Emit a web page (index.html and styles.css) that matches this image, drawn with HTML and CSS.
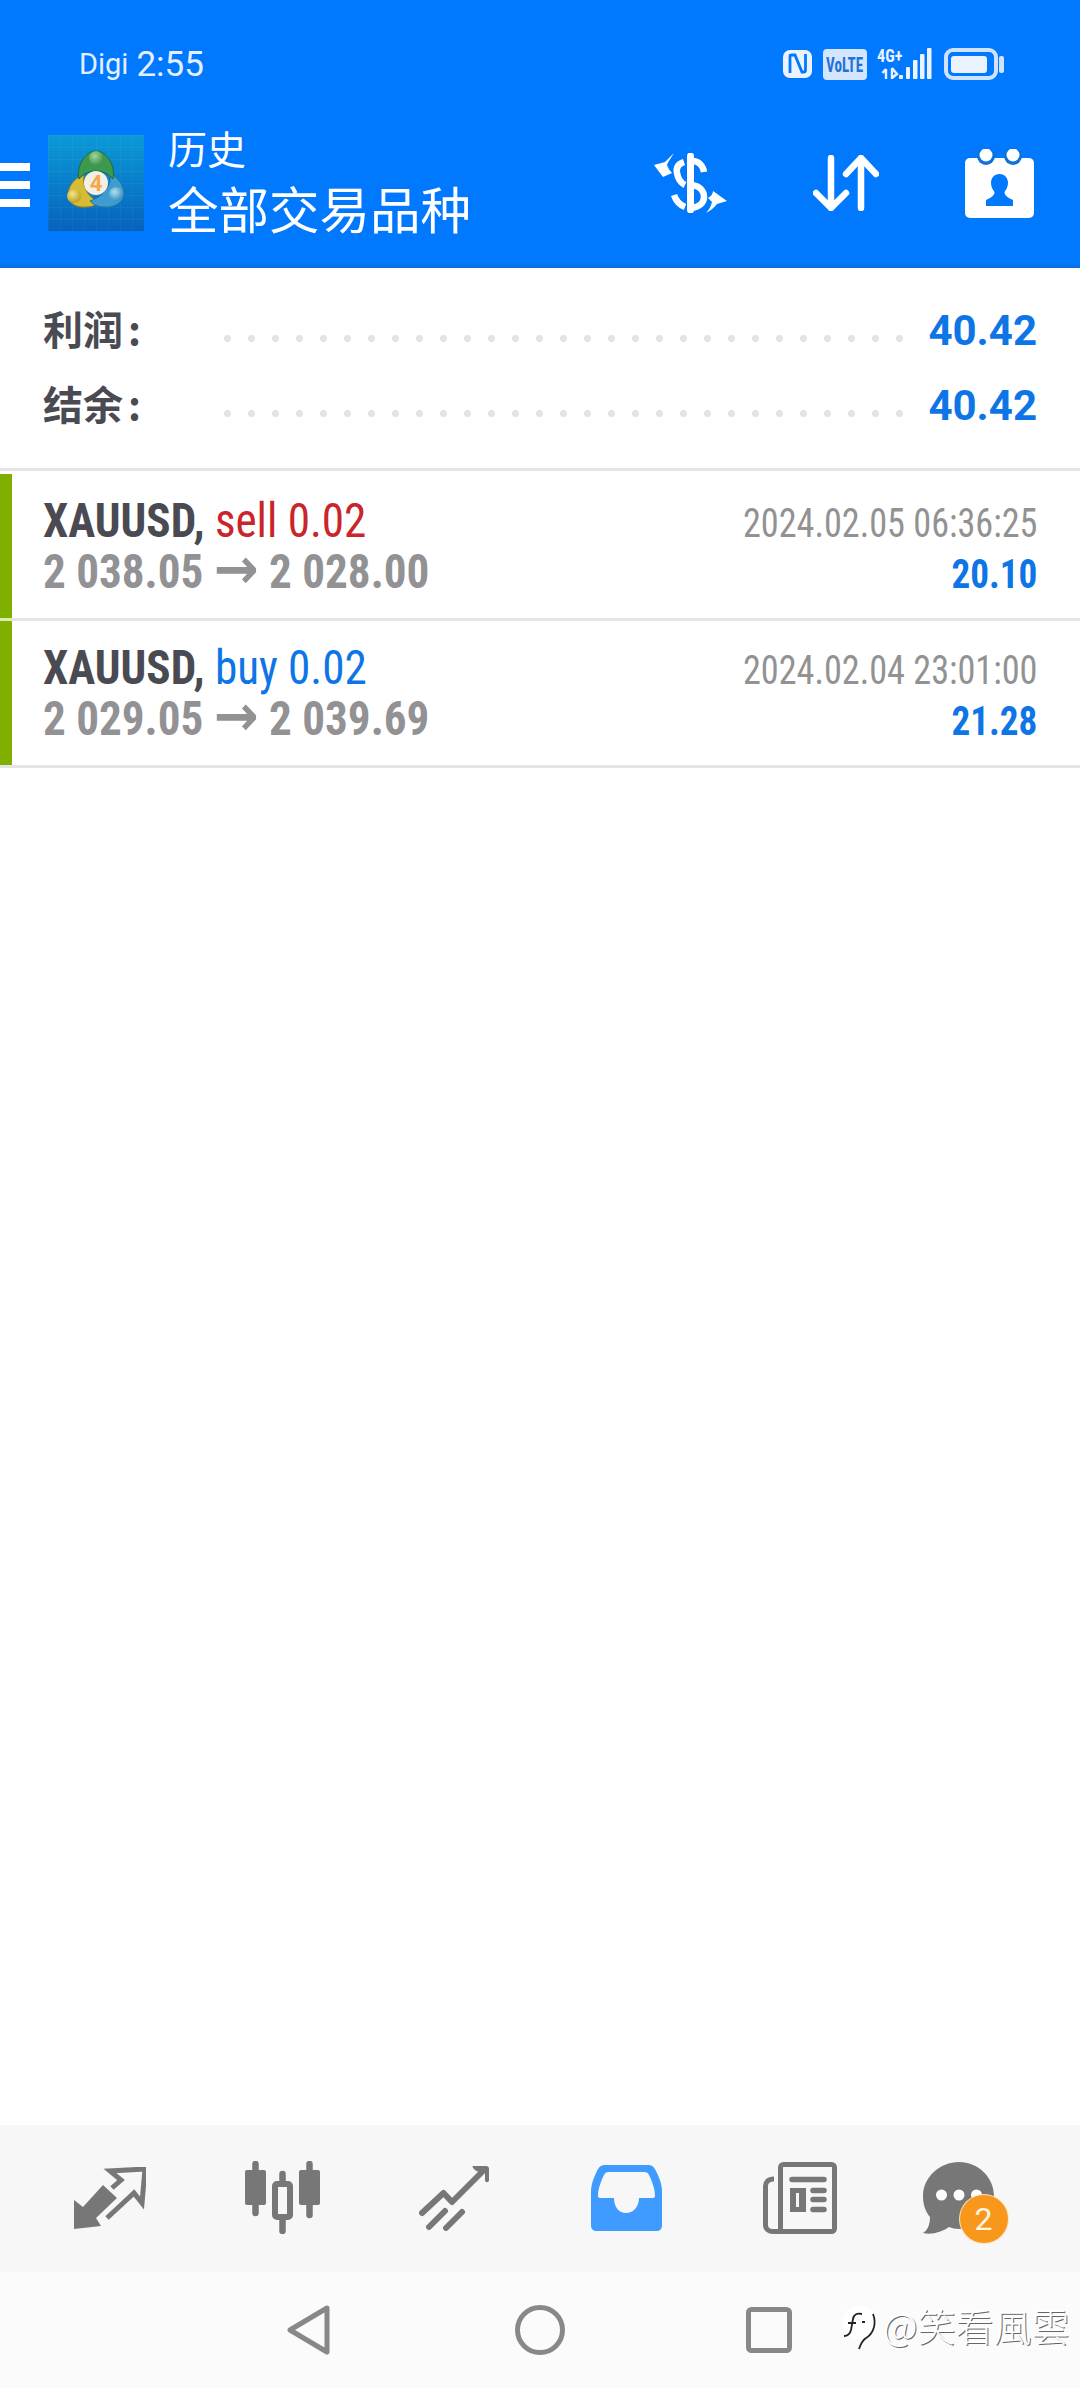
FILE: index.html
```html
<!DOCTYPE html>
<html>
	<head>
		<meta charset='utf8' />
		<title>历史</title>
		<link rel="stylesheet" href="styles.css">
	</head>
	<body>
		<div class="phone">
			<header class="top">
				<div class="status">
					<span class="carrier">Digi</span>
					<span class="clock">2:55</span>
					<div class="status-icons">
						<svg width="29" height="28" viewBox="0 0 29 28">
							<rect width="29" height="28" rx="7" fill="#eaf3ff"/>
							<path d="M7 23V6C7 5 8 5 9 5H12L19 22H21C22 22 22.500 21 22.500 20V4" fill="none" stroke="#0079ff" stroke-width="2.800"/>
						</svg>
						<svg class="volte" width="44" height="31" viewBox="0 0 44 31">
							<rect width="44" height="31" rx="4" fill="#d4e6ff"/>
							<text transform="translate(3 23) scale(.72 1)" class="volte-text">VoLTE</text>
						</svg>
						<svg class="signal" width="55" height="40" viewBox="0 -4 55 40">
							<text transform="translate(0 14) scale(.9 1)" class="net">4G+</text>
							<path d="M9 21V31M5.500 25L9 21M15 20V31M15 20L20 26L15 30" fill="none" stroke="#eaf3ff" stroke-width="2.400"/>
							<rect x="22" y="27" width="4" height="4" rx="1" fill="#eaf3ff"/>
							<rect x="29" y="19" width="4" height="12" rx="1" fill="#eaf3ff"/>
							<rect x="36" y="12" width="4.500" height="19" rx="1" fill="#eaf3ff"/>
							<rect x="43" y="6" width="4.500" height="25" rx="1" fill="#eaf3ff"/>
							<rect x="50" y="0" width="4.500" height="31" rx="1" fill="#eaf3ff"/>
						</svg>
						<svg class="battery" width="60" height="32" viewBox="0 0 60 32">
							<rect x="2" y="2" width="50" height="28" rx="7" fill="none" stroke="#cfe3ff" stroke-width="4"/>
							<rect x="7" y="8" width="36" height="17" rx="3" fill="#eaf3ff"/>
							<rect x="55" y="8" width="5" height="17" rx="2" fill="#cfe3ff"/>
						</svg>
					</div>
				</div>
				<div class="toolbar">
					<div class="burger"><i></i><i></i><i></i></div>
					<svg class="logo" width="96" height="96" viewBox="0 0 96 96">
						<defs>
							<linearGradient id="logobg" x1="0" y1="0" x2="0" y2="1">
								<stop offset="0" stop-color="#0a9ad6"/>
								<stop offset="1" stop-color="#0663bd"/>
							</linearGradient>
							<pattern id="logogrid" width="12" height="12" patternUnits="userSpaceOnUse">
								<path d="M12 0H0V12" fill="none" stroke="#fff" stroke-opacity=".08"/>
							</pattern>
							<radialGradient id="greenball" cx=".4" cy=".35" r=".7">
								<stop offset="0" stop-color="#a6d596"/>
								<stop offset="1" stop-color="#3a9450"/>
							</radialGradient>
							<radialGradient id="yellowball" cx=".4" cy=".35" r=".7">
								<stop offset="0" stop-color="#f4e684"/>
								<stop offset="1" stop-color="#b79c22"/>
							</radialGradient>
							<radialGradient id="blueball" cx=".4" cy=".35" r=".7">
								<stop offset="0" stop-color="#b0e0f0"/>
								<stop offset="1" stop-color="#2f8cbe"/>
							</radialGradient>
						</defs>
						<rect width="96" height="96" fill="url(#logobg)"/>
						<rect width="96" height="96" fill="url(#logogrid)"/>
						<path d="M36 40C28 42 20 50 20 60C20 68 28 73 38 72C44 72 48 70 52 67C42 64 34 54 36 40Z" fill="#d6bc34" stroke="#8f7c1c" stroke-width="1"/>
						<path d="M62 38C70 42 77 52 76 60C75 68 66 73 56 72C50 72 46 70 42 66C54 62 64 52 62 38Z" fill="#3f9ccf" stroke="#1c6f9f" stroke-width="1"/>
						<path d="M31 44C28 30 38 16 48 16C58 16 68 30 65 44C60 38 54 36 48 36C42 36 36 38 31 44Z" fill="#3d9850" stroke="#1f6b3a" stroke-width="1"/>
						<circle cx="48" cy="23" r="7" fill="url(#greenball)"/>
						<circle cx="26" cy="61" r="7" fill="url(#yellowball)"/>
						<circle cx="68" cy="59" r="7" fill="url(#blueball)"/>
						<circle cx="48" cy="48" r="12" fill="#f4efe6"/>
						<text x="48" y="56" class="logo-four">4</text>
					</svg>
					<div class="titles">
						<div class="title-small">历史</div>
						<div class="title-big">全部交易品种</div>
					</div>
					<div class="actions">
						<svg width="73" height="60" viewBox="0 0 73 60">
							<path d="M0 12L11 9C14 6 17 3 20 0C17 5 14 9 13 12C14 15 16 18 18 20L9 24Z" fill="#fff"/>
							<path d="M73 48L59 38C59 41 57 43 54 45L58 49C57 53 55 57 52 60C56 58 60 55 63 51Z" fill="#fff"/>
							<path d="M36.500 3V57" fill="none" stroke="#fff" stroke-width="7" stroke-linecap="round"/>
							<path d="M38 8C45 8 49 13 50 19M30 9C24 11 22 15 23 20C24 26 27 30 31 32M38 32C46 33 50 38 50 44C50 50 45 54 38 55M31 54C26 52 22 48 20 42" fill="none" stroke="#fff" stroke-width="6.500"/>
						</svg>
						<svg width="66" height="56" viewBox="0 0 66 56">
							<path d="M18 3V53M3 38L18 53L33 38M48 53V3M33 19L48 3L63 19" fill="none" stroke="#fff" stroke-width="6.500" stroke-linecap="round" stroke-linejoin="round"/>
						</svg>
						<svg width="69" height="69" viewBox="0 0 69 69">
							<rect y="9" width="69" height="60" rx="5" fill="#fff"/>
							<circle cx="21" cy="7" r="9" fill="#0d72d9"/>
							<circle cx="48" cy="7" r="9" fill="#0d72d9"/>
							<circle cx="21" cy="6" r="6.500" fill="#fff"/>
							<circle cx="48" cy="6" r="6.500" fill="#fff"/>
							<path d="M34.500 25C40 25 43 29 43 34C43 38 41 41 39.500 43C39.500 47 44 49 48 51L48 57H21V51C25 49 29.500 47 29.500 43C28 41 26 38 26 34C26 29 29 25 34.500 25Z" fill="#0079ff"/>
						</svg>
					</div>
				</div>
			</header>

			<section class="summary">
				<div class="sum-row">
					<span class="sum-label">利润<em>:</em></span>
					<span class="leader"></span>
					<span class="sum-value">40.42</span>
				</div>
				<div class="sum-row">
					<span class="sum-label">结余<em>:</em></span>
					<span class="leader"></span>
					<span class="sum-value">40.42</span>
				</div>
			</section>

			<div class="deals">
				<div class="deal">
					<div class="deal-mark"></div>
					<div class="deal-left">
						<div class="deal-line"><b>XAUUSD,</b> <span class="sell">sell 0.02</span></div>
						<div class="deal-line prices">2 038.05 <span class="arrow">→</span> 2 028.00</div>
					</div>
					<div class="deal-right">
						<div class="deal-time">2024.02.05 06:36:25</div>
						<div class="deal-profit">20.10</div>
					</div>
				</div>
				<div class="deal">
					<div class="deal-mark"></div>
					<div class="deal-left">
						<div class="deal-line"><b>XAUUSD,</b> <span class="buy">buy 0.02</span></div>
						<div class="deal-line prices">2 029.05 <span class="arrow">→</span> 2 039.69</div>
					</div>
					<div class="deal-right">
						<div class="deal-time">2024.02.04 23:01:00</div>
						<div class="deal-profit">21.28</div>
					</div>
				</div>
			</div>

			<div class="spacer"></div>

			<nav class="tabs">
				<div class="tab">
					<svg width="72" height="62" viewBox="0 0 72 62">
						<path d="M0 62V33L9 40L29 18L43 31L22 51L27 59Z" fill="#777"/>
						<path d="M38 21L47 13L36 4L71 2L68 36L60 26L33 51" fill="none" stroke="#777" stroke-width="5"/>
					</svg>
				</div>
				<div class="tab">
					<svg width="75" height="73" viewBox="0 0 75 73">
						<g fill="none" stroke="#777" stroke-width="6.500" stroke-linecap="round">
							<path d="M10.500 3V52M37.500 13V70M64.500 3V54"/>
						</g>
						<rect y="9" width="21" height="35" rx="2" fill="#777"/>
						<rect x="54" y="9" width="21" height="35" rx="2" fill="#777"/>
						<rect x="30" y="23" width="15" height="33" rx="2" fill="#f7f7f7" stroke="#777" stroke-width="6"/>
					</svg>
				</div>
				<div class="tab">
					<svg width="71" height="66" viewBox="0 0 71 66">
						<path d="M3 48L24.500 28L33 37L64 6M10 62L26 46M27 63L43 47" fill="none" stroke="#777" stroke-width="6" stroke-linecap="round" stroke-linejoin="round"/>
						<path d="M54 1H67C69 1 70 2 70 4V15C70 18 66 18 66 15V8L60 7C56 6 52 1 54 1Z" fill="#777"/>
					</svg>
				</div>
				<div class="tab">
					<svg width="71" height="66" viewBox="0 0 71 66">
						<path fill="#3f9bff" fill-rule="evenodd" d="M14 0H57C61 0 63 2 65 6C69 14 71 20 71 27V60C71 64 69 66 65 66H6C2 66 0 64 0 60V27C0 20 2 14 6 6C8 2 10 0 14 0ZM18 7C15 7 14 8 13 10C10 16 7 24 7 31C7 32 8 33 9 33H23C23 42 28 48 35 48C42 48 48 42 48 33H62C63 33 64 32 64 31C64 24 61 16 58 10C57 8 56 7 53 7Z"/>
					</svg>
				</div>
				<div class="tab tab-news">
					<svg width="74" height="72" viewBox="0 0 74 72">
						<rect x="17.500" y="2.500" width="54" height="67" rx="3" fill="none" stroke="#777" stroke-width="5"/>
						<path d="M11 17C5 17 2.500 20 2.500 24V63C2.500 67 6 69.500 10 69.500H20" fill="none" stroke="#777" stroke-width="5"/>
						<path d="M29 17.500H61M50 28.500H61M50 37.500H61M50 47.500H61" fill="none" stroke="#777" stroke-width="5.500" stroke-linecap="round"/>
						<path fill="#777" fill-rule="evenodd" d="M27 26H43V50H27ZM33 31V45H36V31Z"/>
					</svg>
				</div>
				<div class="tab tab-chat">
					<div class="chat">
						<svg width="73" height="72" viewBox="0 0 73 72">
							<path d="M37 0C56 0 72 15 72 34C72 53 56 67 37 67C33 67 30 66 27 65C20 70 10 73 1 71C6 68 8 62 8 55C3 49 1 42 1 34C1 15 18 0 37 0Z" fill="#777"/>
							<circle cx="19.500" cy="33" r="5.500" fill="#fff"/>
							<circle cx="37" cy="33" r="5.500" fill="#fff"/>
							<circle cx="54.500" cy="33" r="5.500" fill="#fff"/>
						</svg>
						<span class="badge">2</span>
					</div>
				</div>
			</nav>

			<div class="navbar">
				<svg width="44" height="50" viewBox="0 0 44 50">
					<path d="M40 3L3 25L40 47Z" fill="none" stroke="#888" stroke-width="5" stroke-linejoin="round"/>
				</svg>
				<svg width="50" height="50" viewBox="0 0 50 50">
					<circle cx="25" cy="25" r="22.500" fill="none" stroke="#888" stroke-width="5"/>
				</svg>
				<svg width="46" height="46" viewBox="0 0 46 46">
					<rect x="2.500" y="2.500" width="41" height="41" rx="3" fill="none" stroke="#888" stroke-width="5"/>
				</svg>
				<div class="mark">
					<svg width="36" height="44" viewBox="0 0 36 44">
						<circle cx="18" cy="17" r="17" fill="#fff"/>
						<path d="M2 30C6 30 8 28 9 24L11 13C12 8 15 7 20 8M6 17H14M20 16H23M31 8C35 18 31 28 24 32C21 34 19 37 17 43" fill="none" stroke="#222" stroke-width="1.800"/>
					</svg>
					<span class="mark-text">@笑看風雲</span>
				</div>
			</div>
		</div>
	</body>
</html>
```

FILE: styles.css
```css
html,body {
	margin:0;
	padding:0;
	background:#fff;
}
svg {
	display:block;
	flex:none;
}
.phone {
	position:relative;
	width:1080px;
	height:2388px;
	display:flex;
	flex-direction:column;
	overflow:hidden;
	font-family:Roboto,"Noto Sans CJK SC",sans-serif;
}

/* blue header */
.top {
	background:#0079ff;
	border-bottom:3px solid #0d72d9;
	color:#fff;
}
.status {
	height:128px;
	display:flex;
	align-items:center;
	padding:0 76px 0 79px;
}
.carrier {
	font-size:29px;
	color:#e4f0ff;
}
.clock {
	font-size:35px;
	margin-left:8px;
	color:#e4f0ff;
}
.status-icons {
	margin-left:auto;
	display:flex;
	align-items:center;
}
.volte {
	margin-left:11px;
}
.volte-text {
	font-family:Roboto,sans-serif;
	font-size:21px;
	font-weight:700;
	font-stretch:75%;
	fill:#1f73d6;
}
.signal {
	margin-left:10px;
}
.net {
	font-family:Roboto,sans-serif;
	font-size:18px;
	font-weight:700;
	font-stretch:75%;
	fill:#eaf3ff;
}
.battery {
	margin-left:12px;
}
.toolbar {
	height:110px;
	padding-bottom:27px;
	display:flex;
	align-items:center;
}
.burger {
	width:30px;
	margin-top:4px;
	display:flex;
	flex-direction:column;
	gap:10px;
}
.burger i {
	display:block;
	height:8px;
	background:#fff;
}
.logo {
	margin-left:18px;
}
.logo-four {
	font-family:Roboto,sans-serif;
	font-size:22px;
	font-weight:700;
	fill:#f2a94a;
	text-anchor:middle;
}
.titles {
	margin-left:24px;
	margin-top:-8px;
	font-family:"Noto Sans CJK SC",sans-serif;
}
.title-small {
	font-size:39px;
	line-height:50px;
}
.title-big {
	margin-top:5px;
	font-size:50.500px;
	line-height:60px;
}
.actions {
	margin-left:auto;
	padding-right:46px;
	display:flex;
	align-items:center;
	gap:86px;
}

/* totals */
.summary {
	height:150px;
	padding:25px 43px;
	border-bottom:3px solid #e4e4e4;
}
.sum-row {
	height:75px;
	display:flex;
	align-items:center;
}
.sum-label {
	margin-top:-6px;
	font-family:"Noto Sans CJK SC",sans-serif;
	font-size:40px;
	font-weight:700;
	color:#4a4a52;
}
.sum-label em {
	font-style:normal;
	margin-left:5px;
}
.leader {
	margin-left:auto;
	margin-top:16px;
	width:679px;
	height:7px;
	background:radial-gradient(circle at 3.5px 3.5px,#e3e3e3 3.2px,transparent 3.8px) 0 0/24px 7px repeat-x;
}
.sum-value {
	margin-left:25px;
	font-size:42px;
	font-weight:700;
	color:#0e75e6;
}

/* deal rows */
.deals {
	padding-top:3px;
}
.deal {
	height:144px;
	display:flex;
	border-bottom:3px solid #e4e4e4;
	font-stretch:75%;
}
.deal:first-child .deal-mark {
	box-shadow:0 3px 0 #dcebb8;
}
.deal-mark {
	width:12px;
	background:#7fb000;
}
.deal-left {
	padding:22px 0 0 31px;
}
.deal-line {
	font-size:48px;
	line-height:50px;
	white-space:nowrap;
	transform:scaleX(.94);
	transform-origin:left;
}
.deal-line b {
	color:#4a4a52;
}
.prices {
	margin-top:1px;
	font-weight:700;
	color:#929295;
}
.arrow {
	font-family:"DejaVu Sans",sans-serif;
	font-stretch:100%;
	font-weight:700;
	font-size:57px;
	line-height:40px;
}
.sell {
	color:#c9252b;
}
.buy {
	color:#0e75e6;
}
.deal-right {
	margin-left:auto;
	padding:25px 43px 0 0;
	text-align:right;
}
.deal-time {
	font-size:40px;
	line-height:50px;
	color:#929292;
	white-space:nowrap;
	transform:scaleX(.905);
	transform-origin:right;
}
.deal-profit {
	font-size:40px;
	line-height:51px;
	font-weight:700;
	color:#0e75e6;
	transform:scaleX(.93);
	transform-origin:right;
}

.spacer {
	flex:1;
}

/* bottom tabs */
.tabs {
	height:147px;
	background:#f7f7f7;
	padding-left:24px;
	display:grid;
	grid-template-columns:repeat(6,172px);
	align-items:center;
}
.tab {
	display:flex;
	justify-content:center;
	padding-bottom:2px;
}
.tab-news {
	padding-left:4px;
}
.chat {
	position:relative;
	margin-right:24px;
}
.badge {
	position:absolute;
	left:38px;
	top:33px;
	width:48px;
	height:48px;
	line-height:48px;
	border-radius:50%;
	background:#f7981d;
	box-shadow:0 0 0 1px #fde3bb;
	color:#fff5e0;
	font-size:32px;
	text-align:center;
}

/* system nav */
.navbar {
	position:relative;
	height:116px;
	background:#fbfbfb;
	display:flex;
	align-items:center;
	padding-left:287px;
}
.navbar svg:nth-child(2) {
	margin-left:184px;
}
.navbar svg:nth-child(3) {
	margin-left:181px;
}
.mark {
	position:absolute;
	left:842px;
	top:34px;
	display:flex;
	align-items:center;
}
.mark-text {
	margin-left:5px;
	margin-top:-6px;
	font-family:"Noto Sans CJK TC",sans-serif;
	font-size:38px;
	line-height:42px;
	font-weight:300;
	color:#fff;
	text-shadow:1px 1px 0 #666;
}
```
